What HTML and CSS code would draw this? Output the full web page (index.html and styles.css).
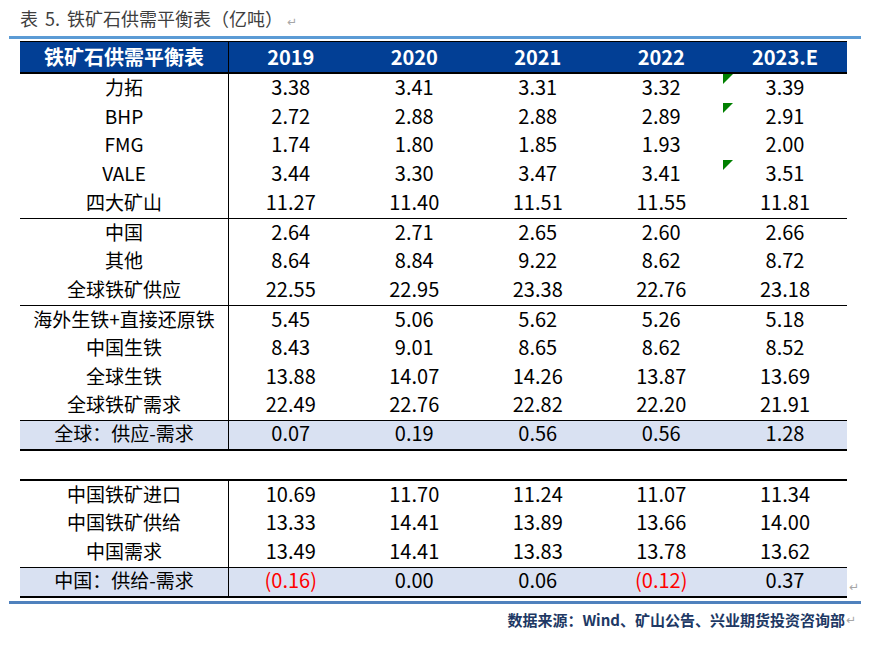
FILE: index.html
```html
<!DOCTYPE html>
<html lang="zh">
<head>
<meta charset="utf-8">
<title>铁矿石供需平衡表</title>
<link rel="stylesheet" href="styles.css">
</head>
<body>
<div class="page">
  <div class="title">表 5. 铁矿石供需平衡表（亿吨）<span class="pm">↵</span></div>
  <div class="rule"></div>
  <div class="tablewrap">
    <div class="table">
      <div class="row head">
        <div class="c first">铁矿石供需平衡表</div>
        <div class="c">2019</div>
        <div class="c">2020</div>
        <div class="c">2021</div>
        <div class="c">2022</div>
        <div class="c">2023.E</div>
      </div>
      <div class="group g1">
        <div class="row"><div class="c first">力拓</div><div class="c">3.38</div><div class="c">3.41</div><div class="c">3.31</div><div class="c">3.32</div><div class="c flag">3.39</div></div>
        <div class="row"><div class="c first">BHP</div><div class="c">2.72</div><div class="c">2.88</div><div class="c">2.88</div><div class="c">2.89</div><div class="c flag">2.91</div></div>
        <div class="row"><div class="c first">FMG</div><div class="c">1.74</div><div class="c">1.80</div><div class="c">1.85</div><div class="c">1.93</div><div class="c">2.00</div></div>
        <div class="row"><div class="c first">VALE</div><div class="c">3.44</div><div class="c">3.30</div><div class="c">3.47</div><div class="c">3.41</div><div class="c flag">3.51</div></div>
        <div class="row"><div class="c first">四大矿山</div><div class="c">11.27</div><div class="c">11.40</div><div class="c">11.51</div><div class="c">11.55</div><div class="c">11.81</div></div>
      </div>
      <div class="group g2">
        <div class="row"><div class="c first">中国</div><div class="c">2.64</div><div class="c">2.71</div><div class="c">2.65</div><div class="c">2.60</div><div class="c">2.66</div></div>
        <div class="row"><div class="c first">其他</div><div class="c">8.64</div><div class="c">8.84</div><div class="c">9.22</div><div class="c">8.62</div><div class="c">8.72</div></div>
        <div class="row"><div class="c first">全球铁矿供应</div><div class="c">22.55</div><div class="c">22.95</div><div class="c">23.38</div><div class="c">22.76</div><div class="c">23.18</div></div>
      </div>
      <div class="group g3">
        <div class="row"><div class="c first">海外生铁+直接还原铁</div><div class="c">5.45</div><div class="c">5.06</div><div class="c">5.62</div><div class="c">5.26</div><div class="c">5.18</div></div>
        <div class="row"><div class="c first">中国生铁</div><div class="c">8.43</div><div class="c">9.01</div><div class="c">8.65</div><div class="c">8.62</div><div class="c">8.52</div></div>
        <div class="row"><div class="c first">全球生铁</div><div class="c">13.88</div><div class="c">14.07</div><div class="c">14.26</div><div class="c">13.87</div><div class="c">13.69</div></div>
        <div class="row"><div class="c first">全球铁矿需求</div><div class="c">22.49</div><div class="c">22.76</div><div class="c">22.82</div><div class="c">22.20</div><div class="c">21.91</div></div>
      </div>
      <div class="row sum"><div class="c first">全球：供应-需求</div><div class="c">0.07</div><div class="c">0.19</div><div class="c">0.56</div><div class="c">0.56</div><div class="c">1.28</div></div>
      <div class="gap"></div>
      <div class="group g5">
        <div class="row"><div class="c first">中国铁矿进口</div><div class="c">10.69</div><div class="c">11.70</div><div class="c">11.24</div><div class="c">11.07</div><div class="c">11.34</div></div>
        <div class="row"><div class="c first">中国铁矿供给</div><div class="c">13.33</div><div class="c">14.41</div><div class="c">13.89</div><div class="c">13.66</div><div class="c">14.00</div></div>
        <div class="row"><div class="c first">中国需求</div><div class="c">13.49</div><div class="c">14.41</div><div class="c">13.83</div><div class="c">13.78</div><div class="c">13.62</div></div>
      </div>
      <div class="row sum"><div class="c first">中国：供给-需求</div><div class="c neg">(0.16)</div><div class="c">0.00</div><div class="c">0.06</div><div class="c neg">(0.12)</div><div class="c">0.37</div></div>
    </div>
    <span class="pm side">↵</span>
  </div>
  <div class="rule bottom"></div>
  <div class="footer">数据来源：Wind、矿山公告、兴业期货投资咨询部<span class="pm">↵</span></div>
</div>
</body>
</html>
```

FILE: styles.css
```css
* { box-sizing: border-box; }
body {
  margin: 0;
  background: #ffffff;
  font-family: "Noto Sans CJK SC", "Noto Sans", sans-serif;
}
.page {
  width: 872px;
  height: 652px;
}
.title {
  height: 36px;
  padding: 2px 0 0 20px;
  line-height: 32px;
  font-size: 18px;
  word-spacing: 3px;
  color: #3f3f3f;
}
.pm {
  font-family: "DejaVu Sans", sans-serif;
  font-size: 12px;
  color: #a6a6a6;
  margin-left: 4px;
}
.rule {
  margin-left: 9px;
  width: 852px;
  height: 3px;
  background: #5b9bd5;
}
.rule.bottom {
  margin-top: 3px;
  background: #4f81bd;
}
.tablewrap {
  display: flex;
  align-items: flex-end;
  margin: 2px 0 0 20px;
}
.side {
  margin-left: 2px;
  line-height: 14px;
  margin-bottom: 4px;
}
.table {
  width: 827px;
}
.row {
  display: grid;
  grid-template-columns: 209px 123.5px 123.5px 123.5px 123.5px 1fr;
}
.c {
  display: flex;
  align-items: center;
  justify-content: center;
  padding-bottom: 3px;
  font-size: 20px;
  line-height: 22px;
  color: #000;
  white-space: nowrap;
}
.c.first {
  font-size: 19px;
  border-right: 1px solid #000;
}
.head {
  height: 33px;
  background: #023f95;
  border-top: 1px solid #000;
  border-bottom: 2px solid #000;
}
.head .c {
  color: #ffffff;
  font-weight: bold;
  font-size: 20px;
  padding-bottom: 1px;
}
.group {
  border-bottom: 1px solid #000;
}
.g1 .row { height: 28.8px; }
.g2 .row { height: 28.67px; }
.g3 .row { height: 28.5px; }
.g5 .row { height: 28.67px; }
.g5 {
  border-top: 2px solid #000;
}
.sum {
  height: 30px;
  background: #d9e1f2;
  border-bottom: 2px solid #000;
}
.gap {
  height: 28px;
}
.neg {
  color: #ff0000;
}
.flag {
  position: relative;
}
.flag::before {
  content: "";
  position: absolute;
  top: 0;
  left: 0;
  border-top: 10px solid #008000;
  border-right: 10px solid transparent;
}
.footer {
  margin-top: 6px;
  height: 20px;
  display: flex;
  justify-content: flex-end;
  align-items: center;
  padding-right: 16px;
  font-size: 15px;
  font-weight: bold;
  color: #203864;
}
.footer .pm {
  margin-left: 1px;
  font-weight: normal;
}
```
